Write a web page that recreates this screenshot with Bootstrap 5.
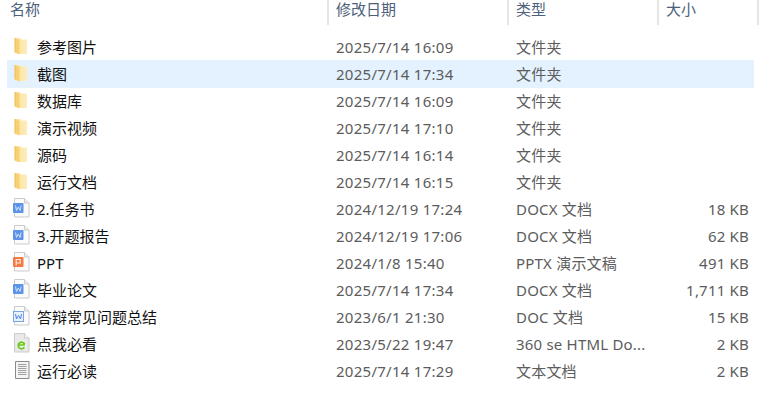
<!doctype html>
<html lang="zh"><head><meta charset="utf-8"><title>文件列表</title>
<link href="https://cdn.jsdelivr.net/npm/bootstrap@5.3.0/dist/css/bootstrap.min.css" rel="stylesheet">
<style>
html,body{margin:0;background:#fff;overflow:hidden}
body{font-family:"Noto Sans","Noto Sans CJK SC",sans-serif;font-size:15px;color:#5c5c5c}
.head-bar{height:25px;color:#4c607a;line-height:19px;margin-bottom:8px}
.head-cell{padding-left:7px;border-right:2px solid #e5e5e5;height:25px}
.c-name{width:329px;flex:none}.c-date{width:180px;flex:none;letter-spacing:.27px}.c-type{width:150px;flex:none;letter-spacing:.2px}.c-size{width:83px;flex:none;letter-spacing:.2px}
.head-cell.c-name{padding-left:10px}
.head-cell.c-date,.head-cell.c-type,.head-cell.c-size{letter-spacing:0}
.head-cell.c-size{width:100px;text-align:left}
.file-list{margin:0 22px 0 7px;list-style:none;padding:0}
.file-row{height:27px;line-height:29px}
.file-row.sel{background:#e3f2fe;box-shadow:0 1px 0 #e3f2fe}
.file-row .c-name{color:#111;display:flex;align-items:flex-start}
.ic{width:17px;height:20px;margin:3px 7px 0 6px;flex:none}
.c-size{text-align:right}
.c-type{white-space:nowrap}
</style></head><body>
<svg width="0" height="0" class="d-block"><defs>
<linearGradient id="fg" x1="0" x2="1"><stop offset="0" stop-color="#fce29a"/><stop offset="1" stop-color="#fdedbd"/></linearGradient>
<symbol id="folder" viewBox="0 0 17 20"><path d="M2 2h5l1 1.500h6V18H7l-5-1.500z" fill="url(#fg)"/><path d="M2 2l4.500 2v14.500l-4.500-2z" fill="#f8d071"/><path d="M2 2v14.500" stroke="#ecbb50" fill="none"/></symbol>
<symbol id="page" viewBox="0 0 17 20"><path d="M1.500.5h10l4.500 4.500v14h-14.500z" fill="#fbfbfb" stroke="#cbcbcb"/><path d="M11.500.5v4.500h4.500" fill="#eee" stroke="#cbcbcb"/></symbol>
<symbol id="docx" viewBox="0 0 17 20"><use href="#page"/><rect x="0" y="5" width="10.500" height="10" rx="1" fill="#5b93e8"/><path d="M2.500 7.500l1 5 1.800-3.500 1.800 3.500 1-5" fill="none" stroke="#cfe0fa"/></symbol>
<symbol id="doc" viewBox="0 0 17 20"><use href="#page"/><rect x=".5" y="5.500" width="10" height="10" fill="#eaf1fc" stroke="#79a4e8"/><path d="M2.500 8l1 5 2-3.500 2 3.500 1-5" fill="none" stroke="#4a85e0"/></symbol>
<symbol id="pptx" viewBox="0 0 17 20"><use href="#page"/><rect x="0" y="5" width="10.500" height="10" rx="1" fill="#f47a45"/><path d="M3.200 13.500V7.500h4v3.500h-4" fill="none" stroke="#fde6da" stroke-width="1.200"/></symbol>
<symbol id="html" viewBox="0 0 17 20"><path d="M1.500.5h10l4.500 4.500v14h-14.500z" fill="#e9e9e9" stroke="#cbcbcb"/><path d="M11.500.5v4.500h4.500" fill="#f8f8f8" stroke="#cbcbcb"/><circle cx="9" cy="12" r="4.500" fill="#eef8e0"/><path d="M6 12h6M11.400 14.200a3.300 3.300 0 1 1 .200-3" fill="none" stroke="#6cc51e" stroke-width="1.700"/></symbol>
<symbol id="txt" viewBox="0 0 17 20"><path d="M2.500 1.500h13.500v17h-13.500z" fill="#f4f4f4" stroke="#8a8a8a"/><path d="M5 4.500h8.500M5 6.500h8.500M5 8.500h8.500M5 10.500h8.500M5 12.500h8.500M5 14.500h8.500" stroke="#a0a0a0"/></symbol>
</defs></svg>
<div class="head-bar d-flex">
<div class="head-cell c-name">名称</div><div class="head-cell c-date">修改日期</div><div class="head-cell c-type">类型</div><div class="head-cell c-size">大小</div>
</div>
<ul class="file-list">
<li class="file-row d-flex"><div class="c-name"><svg class="ic"><use href="#folder"/></svg>参考图片</div><div class="c-date">2025/7/14 16:09</div><div class="c-type">文件夹</div></li>
<li class="file-row sel d-flex"><div class="c-name"><svg class="ic"><use href="#folder"/></svg>截图</div><div class="c-date">2025/7/14 17:34</div><div class="c-type">文件夹</div></li>
<li class="file-row d-flex"><div class="c-name"><svg class="ic"><use href="#folder"/></svg>数据库</div><div class="c-date">2025/7/14 16:09</div><div class="c-type">文件夹</div></li>
<li class="file-row d-flex"><div class="c-name"><svg class="ic"><use href="#folder"/></svg>演示视频</div><div class="c-date">2025/7/14 17:10</div><div class="c-type">文件夹</div></li>
<li class="file-row d-flex"><div class="c-name"><svg class="ic"><use href="#folder"/></svg>源码</div><div class="c-date">2025/7/14 16:14</div><div class="c-type">文件夹</div></li>
<li class="file-row d-flex"><div class="c-name"><svg class="ic"><use href="#folder"/></svg>运行文档</div><div class="c-date">2025/7/14 16:15</div><div class="c-type">文件夹</div></li>
<li class="file-row d-flex"><div class="c-name"><svg class="ic"><use href="#docx"/></svg>2.任务书</div><div class="c-date">2024/12/19 17:24</div><div class="c-type">DOCX 文档</div><div class="c-size">18 KB</div></li>
<li class="file-row d-flex"><div class="c-name"><svg class="ic"><use href="#docx"/></svg>3.开题报告</div><div class="c-date">2024/12/19 17:06</div><div class="c-type">DOCX 文档</div><div class="c-size">62 KB</div></li>
<li class="file-row d-flex"><div class="c-name"><svg class="ic"><use href="#pptx"/></svg>PPT</div><div class="c-date">2024/1/8 15:40</div><div class="c-type">PPTX 演示文稿</div><div class="c-size">491 KB</div></li>
<li class="file-row d-flex"><div class="c-name"><svg class="ic"><use href="#docx"/></svg>毕业论文</div><div class="c-date">2025/7/14 17:34</div><div class="c-type">DOCX 文档</div><div class="c-size">1,711 KB</div></li>
<li class="file-row d-flex"><div class="c-name"><svg class="ic"><use href="#doc"/></svg>答辩常见问题总结</div><div class="c-date">2023/6/1 21:30</div><div class="c-type">DOC 文档</div><div class="c-size">15 KB</div></li>
<li class="file-row d-flex"><div class="c-name"><svg class="ic"><use href="#html"/></svg>点我必看</div><div class="c-date">2023/5/22 19:47</div><div class="c-type">360 se HTML Do...</div><div class="c-size">2 KB</div></li>
<li class="file-row d-flex"><div class="c-name"><svg class="ic"><use href="#txt"/></svg>运行必读</div><div class="c-date">2025/7/14 17:29</div><div class="c-type">文本文档</div><div class="c-size">2 KB</div></li>
</ul>
<script src="https://cdn.jsdelivr.net/npm/bootstrap@5.3.0/dist/js/bootstrap.bundle.min.js"></script>
</body></html>
